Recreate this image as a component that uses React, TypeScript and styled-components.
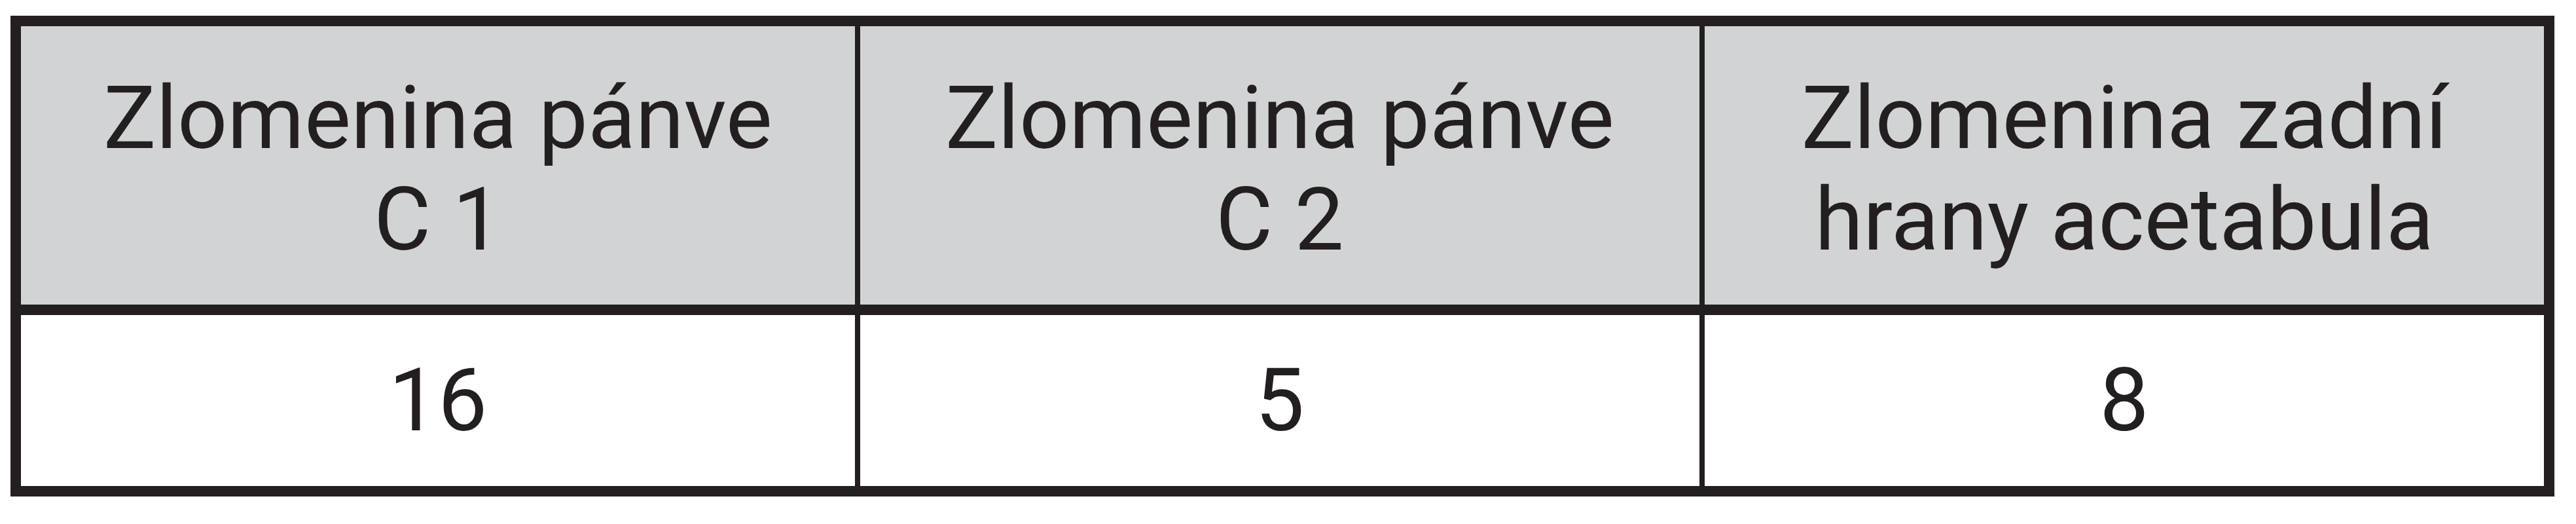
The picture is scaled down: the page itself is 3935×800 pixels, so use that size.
import React from 'react'
import styled, { createGlobalStyle } from 'styled-components'

const GlobalStyle = createGlobalStyle`
  html, body {
    margin: 0;
    padding: 0;
    background: #ffffff;
  }
`

const Page = styled.div`
  padding: 24px 0 0 16px;
`

const Grid = styled.div`
  display: grid;
  grid-template-columns: 1274px 1282px 1282px;
  grid-template-rows: 425px 261px;
  column-gap: 8px;
  row-gap: 16px;
  padding: 16px;
  width: 3886px;
  box-sizing: border-box;
  background: #231f20;
`

const Cell = styled.div<{ $head?: boolean }>`
  display: flex;
  align-items: center;
  justify-content: center;
  text-align: center;
  background: ${(p) => (p.$head ? '#d1d3d4' : '#ffffff')};
  color: #231f20;
  font-family: Roboto, 'Open Sans', sans-serif;
  font-size: 134px;
  line-height: 155px;
  padding-top: ${(p) => (p.$head ? '10px' : '0')};
  box-sizing: border-box;
`

const headers = [
  ['Zlomenina pánve', 'C 1'],
  ['Zlomenina pánve', 'C 2'],
  ['Zlomenina zadní', 'hrany acetabula'],
]

const values = ['16', '5', '8']

const App = () => {
  return (
    <Page>
      <GlobalStyle />
      <Grid>
        {headers.map(([a, b], i) => (
          <Cell $head key={'h' + i}>
            <span>
              {a}
              <br />
              {b}
            </span>
          </Cell>
        ))}
        {values.map((v, i) => (
          <Cell key={'v' + i}>{v}</Cell>
        ))}
      </Grid>
    </Page>
  )
}

export default App
